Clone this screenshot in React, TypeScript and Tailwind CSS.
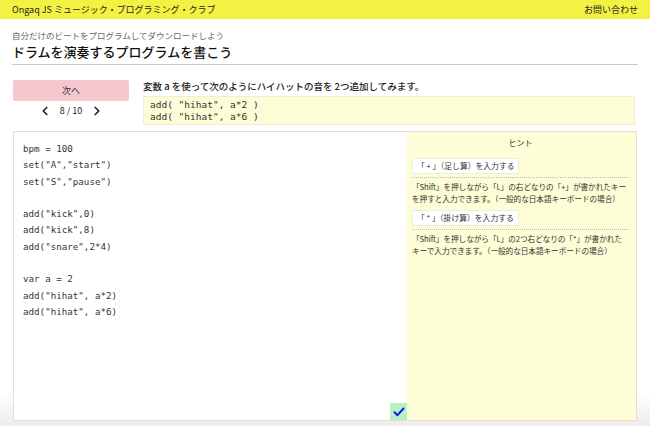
import { ChevronLeft, ChevronRight } from "lucide-react";

const code = [
  'bpm = 100',
  'set("A","start")',
  'set("S","pause")',
  '',
  'add("kick",0)',
  'add("kick",8)',
  'add("snare",2*4)',
  '',
  'var a = 2',
  'add("hihat", a*2)',
  'add("hihat", a*6)',
];

const jp = { fontFamily: '"Noto Sans CJK JP", "Noto Sans", sans-serif' };
const mono = { fontFamily: '"DejaVu Sans Mono", "Liberation Mono", monospace' };

function HintItem({ title, body }: { title: string; body: string }) {
  return (
    <div className="flex flex-col">
      <div className="self-start bg-white border border-[#eeeede] px-1 h-[16px] flex items-center text-[7.8px] text-[#333]">{title}</div>
      <div className="mt-[3px] border-t border-dotted border-[#bbb]" />
      <p className="mt-[3px] text-[7.7px] leading-[12px] tracking-[-0.1px] text-[#333]">{body}</p>
    </div>
  );
}

export default function App() {
  return (
    <div className="w-[650px] h-[426px] overflow-hidden bg-gradient-to-b from-white from-[92%] to-[#ececec] flex flex-col" style={jp}>
      <header className="h-[19px] bg-[#f3f142] flex items-center justify-between px-[12px] text-[9px] text-[#222]">
        <span>Ongaq JS ミュージック・プログラミング・クラブ</span>
        <span>お問い合わせ</span>
      </header>

      <div className="px-[12px] pt-[10px]">
        <p className="text-[8.5px] text-[#666] leading-[12px]">自分だけのビートをプログラムしてダウンロードしよう</p>
        <h1 className="mt-[2px] text-[13px] leading-[17px] font-medium text-[#111]">ドラムを演奏するプログラムを書こう</h1>
        <div className="mt-[4px] border-t border-[#c8c8c8]" />
      </div>

      <div className="flex px-[13px] pt-[15px] gap-[14px]">
        <div className="w-[116px] flex flex-col items-center">
          <button className="w-full h-[21px] bg-[#f6c7cf] rounded-[2px] text-[9px] text-[#333]">次へ</button>
          <div className="mt-[3px] flex items-center gap-[8px] text-[9px] text-[#222]">
            <ChevronLeft size={14} strokeWidth={3} />
            <span>8 / 10</span>
            <ChevronRight size={14} strokeWidth={3} />
          </div>
        </div>
        <div className="flex-1 mr-[2px]">
          <p className="text-[9.5px] leading-[12px] font-medium text-[#222]">変数 a を使って次のようにハイハットの音を 2つ追加してみます。</p>
          <div className="mt-[4px] h-[29px] bg-[#fcfdd6] border border-[#eeeed0] px-[6px] flex flex-col justify-center text-[9.5px] leading-[12px] text-[#333]" style={mono}>
            <div className="whitespace-pre">add( "hihat", a*2 )</div>
            <div className="whitespace-pre">add( "hihat", a*6 )</div>
          </div>
        </div>
      </div>

      <div className="mx-[13px] mt-[6px] h-[290px] flex border border-[#f4d5d9]">
        <div className="relative w-[393px] bg-white pl-[9px] pt-[9px]">
          <div className="text-[9.2px] leading-[16.3px] text-[#333]" style={mono}>
            {code.map((l, i) => (
              <div key={i} className="whitespace-pre h-[16.3px]">{l}</div>
            ))}
          </div>
          <button className="absolute right-0 bottom-0 w-[17px] h-[17px] bg-[#b9f0c6] flex items-center justify-center">
            <svg width="12" height="10" viewBox="0 0 12 10" fill="none">
              <path d="M1.5 5.2 L4.5 8.2 L10.5 1.5" stroke="#1a1adb" strokeWidth="2" strokeLinecap="round" strokeLinejoin="round" />
            </svg>
          </button>
        </div>
        <div className="flex-1 bg-[#fdfed6] pl-[5px] pr-[7px] pt-[5px] flex flex-col gap-[5px]">
          <div className="text-center text-[8px] text-[#333] mb-[4px]">ヒント</div>
          <HintItem
            title="「 + 」（足し算）を入力する"
            body="「Shift」を押しながら「L」の右どなりの「+」が書かれたキーを押すと入力できます。（一般的な日本語キーボードの場合）"
          />
          <HintItem
            title="「 * 」（掛け算）を入力する"
            body="「Shift」を押しながら「L」の2つ右どなりの「*」が書かれたキーで入力できます。（一般的な日本語キーボードの場合）"
          />
        </div>
      </div>
    </div>
  );
}
